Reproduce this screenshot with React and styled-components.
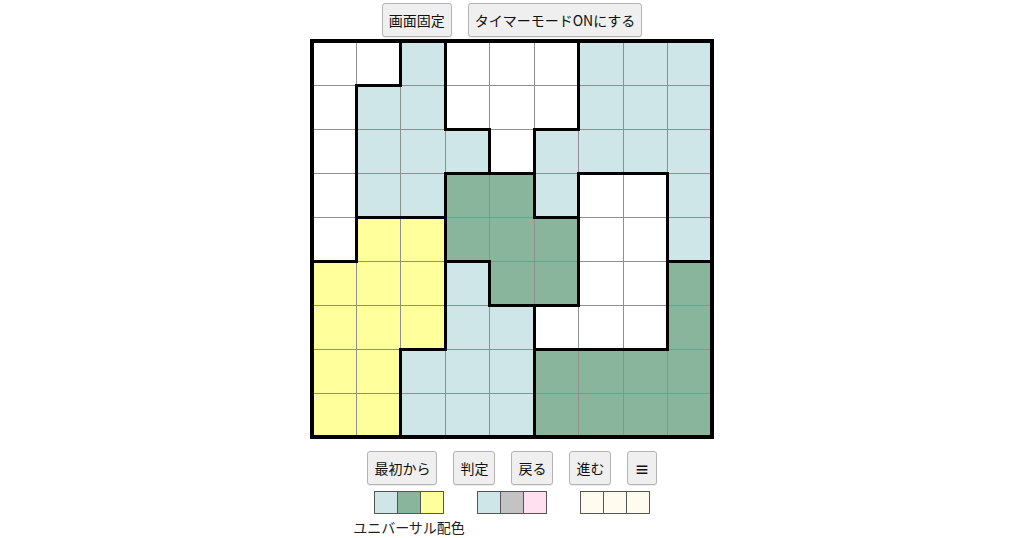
import React from "react";
import styled, { createGlobalStyle } from "styled-components";

const GlobalStyle = createGlobalStyle`
  body {
    margin: 0;
    background: #fff;
    font-family: "Noto Sans CJK JP", "Noto Sans", sans-serif;
    color: #111;
  }
`;

const FILL = {
  W: "#ffffff",
  L: "#cfe6e8",
  G: "#89b59c",
  Y: "#ffff9c",
};

const BOARD = [
  "WWLWWWLLL",
  "WLLWWWLLL",
  "WLLLWLLLL",
  "WLLGGLWWL",
  "WYYGGGWWL",
  "YYYLGGWWG",
  "YYYLLWWWG",
  "YYLLLGGGG",
  "YYLLLGGGG",
];

const PALETTES = [
  { colors: ["#cfe6e8", "#89b59c", "#ffff9c"], label: "ユニバーサル配色" },
  { colors: ["#cfe6e8", "#c3c3c3", "#ffe0f0"] },
  { colors: ["#fffbee", "#fffbee", "#fffbee"] },
];

const Page = styled.div`
  display: flex;
  flex-direction: column;
  align-items: center;
  padding-top: 3px;
`;

const ButtonRow = styled.div`
  display: flex;
  gap: 16px;
  margin-top: ${(p) => p.top || 0}px;
`;

const Button = styled.button`
  height: 34px;
  padding: 0 ${(p) => (p.$icon ? 6 : 6)}px;
  font-family: "Noto Sans CJK JP", "Noto Sans", sans-serif;
  font-size: ${(p) => (p.$icon ? 15 : 14)}px;
  font-weight: ${(p) => (p.$icon ? 700 : 400)};
  color: #111;
  background: #efefef;
  border: 1px solid #b4b4b4;
  border-radius: 3px;
  box-shadow: 0 1px 1px rgba(0, 0, 0, 0.08);
`;

const Board = styled.table`
  margin-top: 2px;
  border-collapse: collapse;
  table-layout: fixed;
  width: 404px;
  border: 4px solid #000;
`;

const Row = styled.tr`
  height: 44px;
`;

const thin = "1px solid #8f8f8f";
const thick = "3px solid #000";

const Cell = styled.td`
  padding: 0;
  background: ${(p) => FILL[p.$c]};
  border-top: ${(p) => (p.$t ? thick : thin)};
  border-bottom: ${(p) => (p.$b ? thick : thin)};
  border-left: ${(p) => (p.$l ? thick : thin)};
  border-right: ${(p) => (p.$r ? thick : thin)};
`;

const Palettes = styled.div`
  display: flex;
  gap: 35px;
  margin-top: 6px;
`;

const PaletteGroup = styled.div`
  display: flex;
  flex-direction: column;
  align-items: center;
  width: 68px;
`;

const Swatches = styled.div`
  display: flex;
  border: 1px solid #555;
`;

const Swatch = styled.div`
  width: 22px;
  height: 21px;
  background: ${(p) => p.color};
  & + & {
    border-left: 1px solid #555;
  }
`;

const PaletteLabel = styled.div`
  margin-top: 4px;
  font-size: 14px;
  white-space: nowrap;
  line-height: 18px;
  color: #222;
`;

function edges(r, c) {
  const me = BOARD[r][c];
  const diff = (rr, cc) =>
    rr >= 0 && rr < 9 && cc >= 0 && cc < 9 && BOARD[rr][cc] !== me;
  return {
    $t: diff(r - 1, c),
    $b: diff(r + 1, c),
    $l: diff(r, c - 1),
    $r: diff(r, c + 1),
  };
}

export default function App() {
  return (
    <Page>
      <GlobalStyle />
      <ButtonRow>
        <Button>画面固定</Button>
        <Button>タイマーモードONにする</Button>
      </ButtonRow>
      <Board>
        <tbody>
          {BOARD.map((row, r) => (
            <Row key={r}>
              {row.split("").map((ch, c) => (
                <Cell key={c} $c={ch} {...edges(r, c)} />
              ))}
            </Row>
          ))}
        </tbody>
      </Board>
      <ButtonRow top={12}>
        <Button>最初から</Button>
        <Button>判定</Button>
        <Button>戻る</Button>
        <Button>進む</Button>
        <Button $icon>≡</Button>
      </ButtonRow>
      <Palettes>
        {PALETTES.map((p, i) => (
          <PaletteGroup key={i}>
            <Swatches>
              {p.colors.map((col, j) => (
                <Swatch key={j} color={col} />
              ))}
            </Swatches>
            {p.label && <PaletteLabel>{p.label}</PaletteLabel>}
          </PaletteGroup>
        ))}
      </Palettes>
    </Page>
  );
}
